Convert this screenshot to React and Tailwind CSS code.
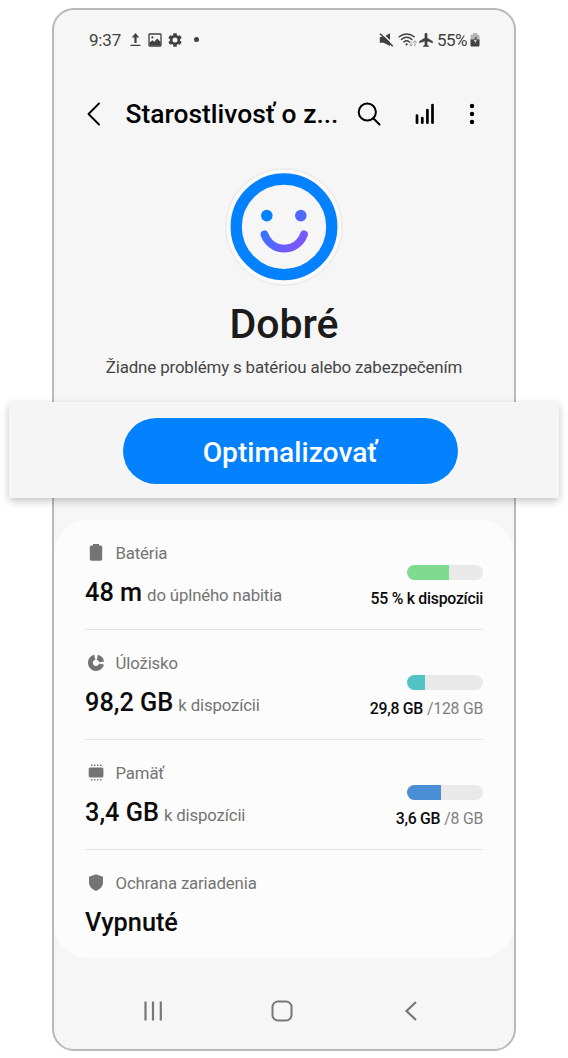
function StatusBar() {
  return (
    <div className="flex h-[60px] items-center pb-px pl-[35px] pr-[34px] text-[#404040]">
      <span className="w-[40.500px] whitespace-nowrap text-[17px] leading-5 tracking-[-0.2px]">9:37</span>
      <svg width="11" height="14" viewBox="0 0 11 14" fill="currentColor">
        <path d="M5.5 0 9.2 4.5H6.6V10H4.4V4.500H1.800ZM.5 11.800h10v1.300H.5Z" />
      </svg>
      <svg className="ml-[7px]" width="14" height="14" viewBox="0 0 14 14">
        <rect x="1" y="1" width="12" height="12" rx=".8" fill="none" stroke="currentColor" strokeWidth="1.300" />
        <path d="M1.500 9.500 4.500 7.300 6.300 8.800 9.200 5.500 12.700 9V12.600H1.500Z" fill="currentColor" />
        <circle cx="4.400" cy="4.400" r="1.100" fill="currentColor" />
      </svg>
      <svg className="ml-1.5" width="14" height="14" viewBox="2 2 20 20" fill="currentColor">
        <path d="M19.140 12.940c.040-.300.060-.610.060-.940s-.020-.640-.070-.940l2.030-1.580a.490.490 0 0 0 .120-.610l-1.920-3.320a.490.490 0 0 0-.590-.220l-2.390.960a7 7 0 0 0-1.620-.940L14.400 2.810a.480.480 0 0 0-.480-.410h-3.840a.470.470 0 0 0-.470.410l-.360 2.540a7 7 0 0 0-1.620.940l-2.390-.960a.480.480 0 0 0-.590.220L2.740 8.870a.470.470 0 0 0 .120.610l2.030 1.580a6 6 0 0 0 0 1.880l-2.030 1.580a.490.490 0 0 0-.120.610l1.920 3.320c.120.220.370.290.590.220l2.390-.960a7 7 0 0 0 1.620.940l.360 2.540c.050.240.240.410.480.410h3.840a.470.470 0 0 0 .470-.410l.360-2.540a7 7 0 0 0 1.620-.940l2.390.960c.220.080.470 0 .590-.220l1.920-3.320a.470.470 0 0 0-.120-.610ZM12 15.600a3.600 3.600 0 1 1 0-7.200 3.600 3.600 0 0 1 0 7.200Z" />
      </svg>
      <span className="ml-3 size-[5px] rounded-full bg-[#404040]" />
      <svg className="ml-auto" width="15" height="14" viewBox="0 0 15 14">
        <path d="M.8 4h3.700L11 .3v12.700L4.500 9.800H.8Z" fill="currentColor" />
        <path d="M1.800-.8 15.500 12.400" stroke="#f6f6f6" strokeWidth="1.500" />
        <path d="M1 .7 13.800 13.200" stroke="currentColor" strokeWidth="1.600" />
      </svg>
      <svg className="ml-1" width="20" height="14" viewBox="0 0 20 14" fill="none" stroke="currentColor" strokeWidth="1.500" strokeLinecap="round">
        <path d="M1.200 3.800C5.700-.1 11.700-.1 16.200 3.800M3.500 6.500c3.200-2.700 7.200-2.700 10.400 0M5.900 9c1.700-1.400 3.900-1.400 5.400 0" />
        <circle cx="8.500" cy="11.300" r=".7" fill="currentColor" strokeWidth=".8" />
        <path d="M13 8.500v4.500m-1.500-1.500L13 13l1.400-1.500M17 13V8m-1.500 1.500L17 8l1.500 1.500" stroke="#a5a5a5" strokeWidth="1" />
      </svg>
      <svg className="ml-px" width="14" height="14" viewBox="2 2 19 20" fill="currentColor" stroke="currentColor" strokeWidth=".8">
        <path d="M21 16v-2l-8-5V3.500a1.500 1.500 0 0 0-3 0V9l-8 5v2l8-2.500V19l-2 1.500V22l3.500-1 3.500 1v-1.500L13 19v-5.500Z" />
      </svg>
      <span className="ml-1 w-[33px] whitespace-nowrap text-[17px] leading-5 tracking-[-0.600px]">55%</span>
      <svg width="10" height="14" viewBox="0 0 10 14">
        <path d="M3 0h4v1.500h1q1.500 0 1.500 1.500v4h-9V3Q.5 1.500 2 1.500h1Z" fill="#b5b5b5" />
        <path d="M.5 6.500h9v6q0 1-1 1h-7q-1 0-1-1Z" fill="currentColor" />
        <path d="M6.300 3.800 2.900 8.500h2l-.5 3.300 3.200-4.700H5.500Z" fill="#f6f6f6" stroke="#404040" strokeWidth=".8" />
      </svg>
    </div>
  );
}

function AppBar() {
  return (
    <div className="flex h-[88px] items-center pb-px pl-[32px] text-black">
      <svg width="16" height="26" viewBox="0 0 16 26" fill="none" stroke="currentColor" strokeWidth="1.900" strokeLinecap="round" strokeLinejoin="round">
        <path d="M13 2.500 2.500 13 13 23.500" />
      </svg>
      <h1 className="ml-[23.500px] w-[231.500px] whitespace-nowrap text-[26.400px] font-medium leading-8">Starostlivosť o z...</h1>
      <svg width="24" height="24" viewBox="0 0 24 24" fill="none" stroke="currentColor" strokeWidth="2" strokeLinecap="round">
        <circle cx="10.300" cy="10" r="8.600" />
        <path d="m16.500 16.500 6 6" />
      </svg>
      <svg className="ml-[34px]" width="20" height="22" viewBox="0 0 20 22" stroke="currentColor" strokeWidth="2.700" strokeLinecap="round">
        <path d="M2 12.500v7.200M7.300 15v4.700M12.400 7v12.700M17.500 2v17.700" />
      </svg>
      <svg className="ml-[34px]" width="6" height="22" viewBox="0 0 6 22" fill="currentColor">
        <circle cx="3" cy="3" r="2.200" />
        <circle cx="3" cy="11" r="2.200" />
        <circle cx="3" cy="19" r="2.200" />
      </svg>
    </div>
  );
}

function Smiley() {
  return (
    <svg className="mx-auto block shrink-0" width="124" height="124" viewBox="0 0 124 124">
      <defs>
        <linearGradient id="smile" x1="38" y1="45" x2="88" y2="80" gradientUnits="userSpaceOnUse">
          <stop offset="0" stopColor="#1480ff" />
          <stop offset=".45" stopColor="#5068ff" />
          <stop offset="1" stopColor="#8b50ff" />
        </linearGradient>
      </defs>
      <circle cx="62" cy="62" r="58" fill="none" stroke="#ececec" strokeWidth="1.800" />
      <circle cx="62" cy="62" r="57.200" fill="#fafafa" />
      <circle cx="62" cy="61.800" r="47.800" fill="#f6f6f6" stroke="#0381fe" strokeWidth="11.300" />
      <circle cx="44.800" cy="50.600" r="5.800" fill="#0381fe" />
      <circle cx="78.800" cy="50.600" r="5.800" fill="#5068ff" />
      <path d="M42.500 69.300C49.500 88.500 75 88.500 82 69.300" fill="none" stroke="url(#smile)" strokeWidth="7.800" strokeLinecap="round" />
    </svg>
  );
}

const ICONS = {
  battery: <path d="M6 0h6v1.600h1.500q1.700 0 1.700 1.700v11.900q0 1.600-1.700 1.600h-9q-1.700 0-1.700-1.600V3.300q0-1.700 1.700-1.700H6Z" />,
  storage: (
    <g fill="none" stroke="currentColor" strokeWidth="5">
      <path d="M7.800 3.200a5.700 5.700 0 1 0 6.800 7M10.300 3.200a5.700 5.700 0 0 1 4.300 4.600" />
    </g>
  ),
  memory: (
    <>
      <rect x="1.700" y="3.500" width="14.700" height="10" rx="1.500" />
      <path d="M4 .5h1.400V2H4ZM7 .5h1.400V2H7ZM10 .5h1.400V2H10ZM13 .5h1.400V2H13ZM4 15h1.400v1.500H4ZM7 15h1.400v1.500H7ZM10 15h1.400v1.500H10ZM13 15h1.400v1.500H13Z" />
    </>
  ),
  shield: <path d="M9 .2 16 2.700V8.500C16 12.500 12.700 15.500 9 17 5.300 15.500 2 12.500 2 8.500V2.700Z" />,
};

const ROWS = [
  { icon: "battery", label: "Batéria", value: "48 m", note: "do úplného nabitia", bar: "w-[42px] bg-[#7fdb8e]", strong: "55 % k dispozícii" },
  { icon: "storage", label: "Úložisko", value: "98,2 GB", note: "k dispozícii", bar: "w-[18px] bg-[#52c3c4]", strong: "29,8 GB", total: "/128 GB" },
  { icon: "memory", label: "Pamäť", value: "3,4 GB", note: "k dispozícii", bar: "w-[33.500px] bg-[#4a8fd6]", strong: "3,6 GB", total: "/8 GB" },
  { icon: "shield", label: "Ochrana zariadenia", value: "Vypnuté" },
];

function Row({ row, last }) {
  return (
    <div className={`flex h-[110px] justify-between whitespace-nowrap ${last ? "" : "border-b-[1.500px] border-[#e5e5e5]"}`}>
      <div className="pt-[22px]">
        <div className="flex h-[22px] items-center text-[#747474]">
          <svg className="ml-[2px]" width="18" height="18" viewBox="0 0 18 18" fill="currentColor">{ICONS[row.icon]}</svg>
          <span className="ml-[10.500px] text-[16.800px] leading-[22px] tracking-[-0.150px]">{row.label}</span>
        </div>
        <div className="mt-[13px] flex h-8 items-baseline gap-[5px]">
          <span className="text-[25.300px] font-medium leading-8 text-[#0b0b0b]">{row.value}</span>
          {row.note && <span className="text-[16.800px] leading-5 tracking-[-0.150px] text-[#747474]">{row.note}</span>}
        </div>
      </div>
      {row.bar && (
        <div className="flex flex-col items-end pt-[45px]">
          <div className="h-[15px] w-[76px] overflow-hidden rounded-full bg-[#e9e9e9]">
            <div className={`h-full ${row.bar}`} />
          </div>
          <div className="mt-[9px] flex gap-1 text-[15.800px] leading-5 tracking-[-0.250px]">
            <span className="font-medium text-[#0b0b0b]">{row.strong}</span>
            {row.total && <span className="text-[#808080]">{row.total}</span>}
          </div>
        </div>
      )}
    </div>
  );
}

export default function App() {
  return (
    <div className="h-[1058px] w-[568px] bg-white pt-2 font-['Roboto',sans-serif]">
      <div className="ml-[52px] flex h-[1043px] w-[464px] flex-col rounded-[22px] border-2 border-[#b9b9b9] bg-[#f6f6f6]">
        <StatusBar />
        <AppBar />
        <div className="flex h-[244px] flex-col items-center pt-[7px]">
          <Smiley />
          <h2 className="mt-[11px] text-[41px] font-medium leading-[48px] text-[#1b1b1b]">Dobré</h2>
          <p className="mt-[7px] whitespace-nowrap text-[16.900px] leading-6 tracking-[-0.150px] text-[#454545]">Žiadne problémy s batériou alebo zabezpečením</p>
        </div>
        <div className="z-10 -mx-[45px] flex h-24 shrink-0 items-center justify-center bg-[#f5f5f5] pl-3 pt-0.5 shadow-[0_3px_8px_rgba(0,0,0,0.24)]">
          <button className="h-[66px] w-[335px] rounded-full bg-[#0381fe] pt-[3px] text-[28.200px] font-medium leading-8 text-white ring-1 ring-[#fdfdfd]">Optimalizovať</button>
        </div>
        <div className="mt-[22px] h-[438px] shrink-0 rounded-[34px] bg-[#fcfcfc] px-[31px]">
          {ROWS.map((row, i) => (
            <Row key={row.label} row={row} last={i === ROWS.length - 1} />
          ))}
        </div>
        <div className="flex flex-1 items-center pl-[89px] pt-[14px] text-[#777777]">
          <svg width="20" height="22" viewBox="0 0 20 22" stroke="currentColor" strokeWidth="2.200">
            <path d="M2.500 1.500v19M10 1.500v19M17.800 1.500v19" />
          </svg>
          <svg className="ml-[108px]" width="22" height="22" viewBox="0 0 22 22" fill="none" stroke="currentColor" strokeWidth="2">
            <rect x="1.500" y="1.500" width="19" height="19" rx="5.500" />
          </svg>
          <svg className="ml-[111px]" width="14" height="22" viewBox="0 0 14 22" fill="none" stroke="currentColor" strokeWidth="2.200">
            <path d="m12 2-9.500 9 9.500 9" />
          </svg>
        </div>
      </div>
    </div>
  );
}
